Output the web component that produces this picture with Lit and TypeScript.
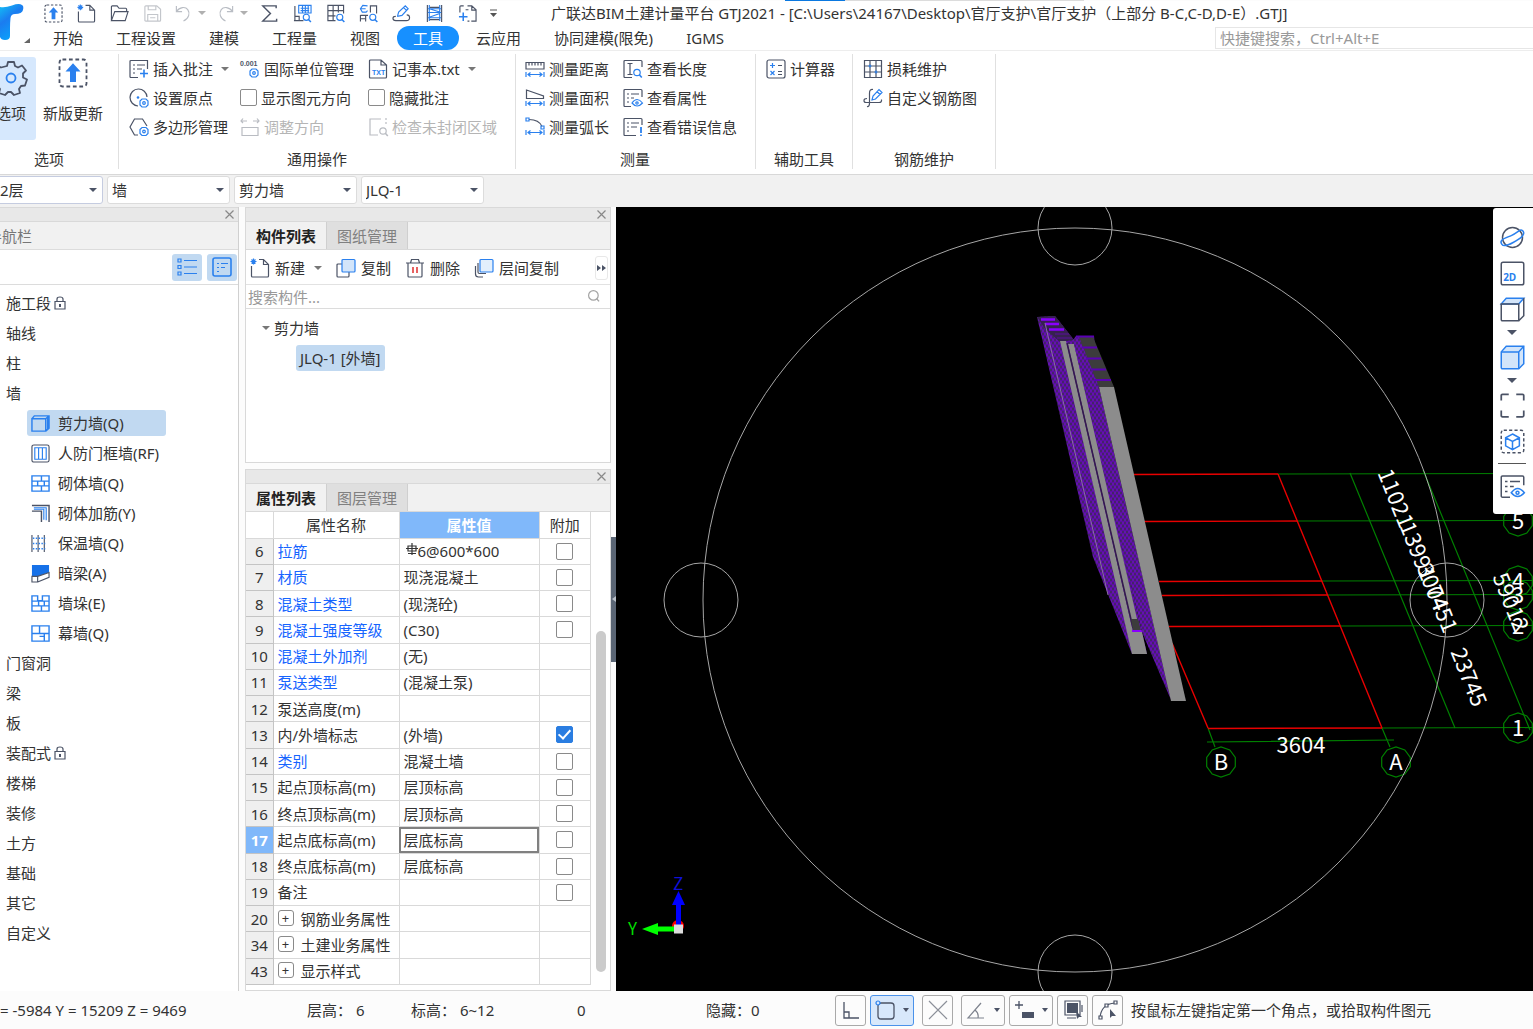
import { LitElement, html, svg, css, nothing, type SVGTemplateResult } from "lit";
import { customElement, state } from "lit/decorators.js";
import { classMap } from "lit/directives/class-map.js";

const D = "#4b5366";
const B = "#2a80ee";

const measureBar = svg`<path d="M1 13v5M19 13v5M3 15.500h14M5.500 13.500L3 15.500l2.500 2M14.500 13.500l2.500 2-2.500 2" stroke=${B}/>`;
const gear = (cx: number, cy: number, color = B) => svg`
  <path d="M${cx - 2} ${cy - 4}h4l2 2v4l-2 2h-4l-2-2v-4z" stroke=${color}/><circle cx=${cx} cy=${cy} r="1.300" stroke=${color}/>`;
const lens = (cx: number, cy: number, color = B) => svg`
  <circle cx=${cx} cy=${cy} r="3.200" stroke=${color}/><path d="M${cx + 2.3} ${cy + 2.3}l2.500 2.700" stroke=${color} stroke-width="1.600"/>`;

const icons: Record<string, SVGTemplateResult> = {
  upload: svg`<rect x="1" y="1" width="18" height="18" rx="2" stroke=${D} stroke-dasharray="2.500 1.800"/>
    <path d="M10 3.500l5 5.500h-3v7H8V9H5z" fill=${B}/>`,
  newfile: svg`<path d="M1.500 8v10q0 1 1 1h15q1 0 1-1V6.500l-5-5H9M13.500 1.500v5h5" stroke=${D}/>
    <path d="M0.500 3.500h6M3.500 0.500v6M1.500 1.500l4 4M5.500 1.500l-4 4" stroke=${B}/>`,
  open: svg`<path d="M1.500 17V3q0-1 1-1h5l2 2.500h7q1 0 1 1V8M1.500 17.500L5 8h14l-3 9.500z" stroke=${D}/>`,
  save: svg`<path d="M2 3q0-1 1-1h11.500L18.500 5.500V17q0 1-1 1H3q-1 0-1-1zM5.500 2v4h8V2M5 18v-7h10.500v7M7.500 14.500H13" stroke="#c3c6cb"/>`,
  undo: svg`<path d="M2.500 2v6h6M2.500 8C6 3 12 2.500 14.500 6s1.500 9-4.500 12" stroke="#b9bdc4"/>`,
  redo: svg`<path d="M17.500 2v6h-6M17.500 8C14 3 8 2.500 5.500 6s-1.500 9 4.500 12" stroke="#b9bdc4"/>`,
  sigma: svg`<path d="M17 4.500V2H3l8 8-8 8h14.500v-2.500" stroke=${D} stroke-width="1.500"/>`,
  floorFind: svg`<path d="M2 2v15.500h9M2 13h4.500v4.500M1 17.500h3" stroke=${D}/>
    <path d="M6 1.500h13v8H6zM8 4.500h9M8 7h9M10 2v7M13 2v7M16 2v7" stroke=${B}/>${lens(14, 14)}`,
  gridFind: svg`<path d="M10 17.500H2V1.500h16.500V10M2 7h16.500M2 12.500h8M7.500 1.500v16M13 1.500V9" stroke=${D}/>${lens(14.500, 14)}`,
  compFind: svg`<path d="M1.500 11.500v7M1.500 12h8M7 12v6.500M1.500 15.500H7M12 9V2h6.500v8" stroke=${D}/>
    <path d="M9 2L4 1.500 1.500 5l2 3.500h4L9 7M2 5h5" stroke=${B}/>${lens(14.500, 14)}`,
  edit: svg`<path d="M6 12l1-3.500L14 2l3 3-6.500 7L6 13zM12.500 4l3 3" stroke=${B}/><path d="M1 15q0 2.500 3 2.500h11q3.500 0 3.500-3t-3-3M1 15q0-2 3-2" stroke=${D}/>`,
  beam: svg`<path d="M2.500 1v18M17.500 1v18M4.500 3.500h11M4.500 16.500h11" stroke=${D}/><path d="M3 5h14M3 9h14M3 14.500h14M4.500 5l11 3.500M4.500 14l11-4M4.500 1v17M15.500 1v17" stroke=${B}/>`,
  pageAdd: svg`<path d="M2 9V3q0-1 1-1h3M10 2h4.500L19 6v12h-5M14.500 2v4.500H19M12 18h-2M8 6h3" stroke=${D}/><path d="M1 13.500h9M5.500 9v9" stroke=${B} stroke-width="1.600"/>`,
  note: svg`<path d="M9 18.500H2q-1 0-1-1v-15q0-1 1-1h16.500V10" stroke=${D}/><path d="M4 6h2M8 6h8M4 10h2M8 10h5M4 14h2" stroke=${D}/><path d="M11 14.500h8M15 10.500v8" stroke=${B} stroke-width="1.600"/>`,
  origin: svg`<path d="M9 18A8.500 8.500 0 1 1 18 9" stroke=${D}/><circle cx="9" cy="9.500" r="1.300" fill=${B}/>${gear(15, 15)}`,
  polygon: svg`<path d="M9 18H5.500L1 10l4.500-8h8L18 9" stroke=${D}/>${gear(15, 14.500)}`,
  unit: svg`<text x="0" y="7" font-size="7" font-weight="700" fill=${D} stroke="none" font-family="Liberation Sans, sans-serif">0.001</text>${gear(14, 14)}`,
  direction: svg`<path d="M1 4h6M3 1.500L1 4l2 2M13 4h6M17 1.500L19 4l-2 2M2 10.500h16v8H2z" stroke="#b9bcc2"/>`,
  txt: svg`<path d="M1.500 18V2q0-1 1-1H13l5.500 5v12q0 1-1 1h-15q-1 0-1-1M13 1v5h5.500" stroke=${D}/>
    <text x="4" y="15.500" font-size="7" font-weight="700" fill=${B} stroke="none" font-family="Liberation Sans, sans-serif">TXT</text>`,
  region: svg`<path d="M13 2H2v16h8M18 1v2M18 5v2" stroke="#b9bcc2"/>${lens(15, 14, "#b9bcc2")}`,
  distance: svg`<path d="M1 3.500h18v6.500H1zM4 3.500v3M7 3.500v3M10 3.500v3M13 3.500v3M16 3.500v3" stroke=${D}/>${measureBar}`,
  area: svg`<path d="M1.500 2v8.500h17V8z" stroke=${D}/>${measureBar}`,
  arc: svg`<path d="M4 2.500q10 0 13 7" stroke=${D}/><path d="M1 1h3v3H1zM16 9h3v3h-3z" stroke=${B}/>${measureBar}`,
  length: svg`<path d="M9 18.500H2q-1 0-1-1v-15q0-1 1-1h16q1 0 1 1V8M4.500 4.500h5M7 4.500v11M4.500 15.500h5" stroke=${D}/>${lens(14, 13.500)}`,
  props: svg`<path d="M8 18.500H2q-1 0-1-1v-15q0-1 1-1h16q1 0 1 1V9M4 6h2M8 6h8M4 10h2M8 10h3M4 14h2" stroke=${D}/>
    <path d="M9 15q5-7 10.500 0-5.500 6-10.500 0z" stroke=${B}/><circle cx="14" cy="15" r="1.200" stroke=${B}/>`,
  errors: svg`<path d="M13 18.500H2q-1 0-1-1v-15q0-1 1-1h16q1 0 1 1V8M4 6h2M8 6h8M4 10h2M8 10h6M4 14h2" stroke=${D}/><path d="M18 10v6M18 17.500v1.500" stroke=${B} stroke-width="1.800"/>`,
  calc: svg`<rect x="1" y="1" width="18" height="18" rx="2" stroke=${D}/><path d="M12 6.500h4M12 12.500h4M12 15.500h4" stroke=${D}/><path d="M4 6.500h5M6.500 4v5M4.500 12l4 4M8.500 12l-4 4" stroke=${B}/>`,
  loss: svg`<path d="M1.500 1.500h17v17h-17zM1.500 7h17M1.500 13h17M7 1.500v17M13 1.500v17" stroke=${D}/><path d="M7 5.500v3M5.500 7h3M13 11.500v3M11.500 13h3" stroke=${B}/>`,
  rebar: svg`<path d="M10 1.500Q6.500 1 6.500 5v10q0 4-2.500 3.500M4 10.500q-3 0-3 2t2 2h13q3 0 2.500-3" stroke=${D}/><path d="M9 12l1-4 6-6.500 3 3L12.500 11zM14 3.500l3 3" stroke=${B}/>`,
  copy: svg`<path d="M6 6H2q-1 0-1 1v11q0 1 1 1h10q1 0 1-1v-4" stroke=${D}/><rect x="6" y="1.500" width="13" height="12.500" rx="1" stroke=${B} fill="#d3e5fa"/>`,
  trash: svg`<path d="M1 5h18M5.500 5l1-3.500h7l1 3.500M3 5v13q0 1 1 1h12q1 0 1-1V5" stroke=${D}/><path d="M8 9v6M12 9v6" stroke="#e23b3b" stroke-width="1.600"/>`,
  layerCopy: svg`<path d="M4 5v9q0 1.500 1.500 1.500H12M1.500 8v8q0 3 3 3H9" stroke=${D}/><rect x="6" y="1.500" width="13" height="12.500" rx="1" stroke=${B} fill="#e3effc"/>`,
  list: svg`<path d="M1 2h3v3H1zM1 8.500h3v3H1zM1 15h3v3H1zM7 3.500h13M7 10h13M7 16.500h13" stroke=${B}/>`,
  card: svg`<rect x="1" y="1" width="18" height="18" rx="2" stroke=${B} stroke-width="1.600"/><path d="M5 6.500h2M9 6.500h7M5 10.500h2M9 10.500h4M5 14.500h2" stroke=${B}/>`,
  shear: svg`<path d="M1 5h14.500v13H1zM1 5l2.500-3H19v13l-3.500 3M15.500 5L19 2M17.500 4v12" stroke=${B} stroke-width="1.500"/>`,
  door: svg`<rect x="1" y="1" width="18" height="18" rx="2" stroke=${D}/><path d="M4 4h12v12H4zM8 4v12M12 4v12" stroke=${B}/>`,
  brick: svg`<path d="M1 2h18v16H1zM1 7.500h18M1 12.500h18M11 2v5.500M7 7.500v5M14 7.500v5M11 12.500V18" stroke=${B} stroke-width="1.500"/>`,
  brickBar: svg`<path d="M1 1.500h18V19M1 7.500h10V19" stroke=${D} stroke-width="1.500"/><path d="M3 4h13v13M3 5.500h10.500v11" stroke=${B}/>`,
  insulate: svg`<path d="M1 1v18M7.500 1v18M14 1v18" stroke=${D}/><path d="M2 4.500h13M2 10h13M2 15.500h13" stroke=${B} stroke-width="1.500" stroke-dasharray="1.500 1.500"/>`,
  hidden: svg`<path d="M1 1h18v8l-11 4H1z" fill="#1671e8"/><path d="M1 13h6v6H1zM7 13l12-4v5L7 19" stroke=${D} fill="#fff"/>`,
  pier: svg`<path d="M1 2h6v5h5V2h7v16H1zM1 7.500h18M1 12.500h18M8 7.500v5M14 7.500v5M11 12.500V18" stroke=${B} stroke-width="1.500"/>`,
  curtain: svg`<path d="M1 2h18v16H1zM1 10h18M9 2v8M14 10v8M9 13h5" stroke=${B} stroke-width="1.500"/>`,
  orbit: svg`<circle cx="10" cy="10" r="8" stroke=${D}/><path d="M1.500 15.500C-1 12 3 11 9 8.500S16.500 2 18.500 5 16 11 10.500 14 2.500 17 1.500 15.500z" stroke=${B}/>`,
  twoD: svg`<rect x="1" y="1" width="18" height="18" rx="1.500" stroke=${D}/><text x="2.500" y="16" font-size="8" font-weight="700" fill=${B} stroke="none" font-family="Open Sans, sans-serif">2D</text>`,
  cubeTop: svg`<path d="M1 5.500L5 1h14l-4 4.500z" stroke=${B} fill="#d3e5fa"/><path d="M1 5.500h14V19H2q-1 0-1-1zM15 19l4-4V1" stroke=${D}/>`,
  cube: svg`<path d="M1 5.500L5 1h14v14l-4 4H2q-1 0-1-1z" fill="#d3e5fa" stroke=${B}/><path d="M1 5.500h14V19M15 5.500L19 1" stroke=${B}/>`,
  frame: svg`<path d="M1 6V2q0-1 1-1h5M13 1h5q1 0 1 1v4M19 14v4q0 1-1 1h-5M7 19H2q-1 0-1-1v-4" stroke=${D} stroke-width="1.400"/>`,
  cubeBox: svg`<rect x="1" y="1" width="18" height="18" rx="2" stroke=${D} stroke-dasharray="2.500 1.800"/><path d="M10 4l5.500 3v6.500L10 16.500l-5.500-3V7zM4.500 7L10 10l5.500-3M10 10v6.500" stroke=${B}/>`,
  lock: svg`<path d="M1 5.500h10V13H1zM3 5.500V3q0-2 3-2t3 2v2.500" stroke=${D}/><path d="M6 8v3" stroke=${D} stroke-width="2"/>`,
  find: svg`<circle cx="8" cy="8" r="6" stroke="#a3a3a3" stroke-width="1.500"/><path d="M12 12l3 3.500" stroke="#a3a3a3" stroke-width="1.800"/>`,
  ortho: svg`<path d="M3 2v16h15M3 12h5v6" stroke=${D} stroke-width="1.300"/>`,
  rectSel: svg`<rect x="3" y="3" width="16" height="16" rx="3" stroke=${D} stroke-width="1.300"/><circle cx="3" cy="3" r="2" stroke=${B} fill="#d8e8fb"/>`,
  cross: svg`<path d="M1 1l18 18M19 1L1 19" stroke="#8c9099"/>`,
  angle: svg`<path d="M18 18H2L15 3M9 10q4 3 3 8" stroke="#7d828d"/>`,
  plusBar: svg`<path d="M1 5h8M5 1v8" stroke=${D} stroke-width="1.300"/><path d="M8 12h12v6H8z" fill=${D}/>`,
  stack: svg`<path d="M4 3h11v10H4z" fill=${D}/><path d="M2 1h15v14H2zM4 18h9M19 5v7" stroke=${D}/><path d="M13 11l6 6-3 0-2 2z" fill=${D}/>`,
  curve: svg`<path d="M2 18Q3 4 17 3" stroke=${D}/><path d="M1 16h3v3H1zM16 1h3v3h-3zM7 4h3v3H7z" fill="#fff" stroke=${D}/><path d="M12 9l6 7h-4l-2 2z" fill=${D}/>`,
};

const icon = (name: string, cls = "") =>
  html`<svg class="ic ${cls}" viewBox="0 0 20 20" fill="none" stroke-width="1.200" aria-hidden="true">${icons[name]}</svg>`;
const caret = html`<i class="caret"></i>`;

interface PropRow { n: number; name: string; value?: string; link?: boolean; box?: boolean; on?: boolean; group?: boolean; rebar?: boolean }

const propRows: PropRow[] = [
  { n: 6, name: "拉筋", value: "6@600*600", link: true, box: true, rebar: true },
  { n: 7, name: "材质", value: "现浇混凝土", link: true, box: true },
  { n: 8, name: "混凝土类型", value: "(现浇砼)", link: true, box: true },
  { n: 9, name: "混凝土强度等级", value: "(C30)", link: true, box: true },
  { n: 10, name: "混凝土外加剂", value: "(无)", link: true },
  { n: 11, name: "泵送类型", value: "(混凝土泵)", link: true },
  { n: 12, name: "泵送高度(m)" },
  { n: 13, name: "内/外墙标志", value: "(外墙)", box: true, on: true },
  { n: 14, name: "类别", value: "混凝土墙", link: true, box: true },
  { n: 15, name: "起点顶标高(m)", value: "层顶标高", box: true },
  { n: 16, name: "终点顶标高(m)", value: "层顶标高", box: true },
  { n: 17, name: "起点底标高(m)", value: "层底标高", box: true },
  { n: 18, name: "终点底标高(m)", value: "层底标高", box: true },
  { n: 19, name: "备注", box: true },
  { n: 20, name: "钢筋业务属性", group: true },
  { n: 34, name: "土建业务属性", group: true },
  { n: 43, name: "显示样式", group: true },
];

const wallTypes: [string, string][] = [
  ["shear", "剪力墙(Q)"], ["door", "人防门框墙(RF)"], ["brick", "砌体墙(Q)"], ["brickBar", "砌体加筋(Y)"],
  ["insulate", "保温墙(Q)"], ["hidden", "暗梁(A)"], ["pier", "墙垛(E)"], ["curtain", "幕墙(Q)"],
];

const octagon = (cx: number, cy: number, r = 15) =>
  Array.from({ length: 10 }, (_, i) => {
    const a = (i * Math.PI) / 5 + Math.PI / 10;
    return `${(cx + r * Math.cos(a)).toFixed(1)},${(cy + r * Math.sin(a)).toFixed(1)}`;
  }).join(" ");

@customElement("app-root")
export class AppRoot extends LitElement {
  @state() private tab = "工具";
  @state() private wall = 0;
  @state() private row = 17;

  static styles = css`
    :host {
      display: flex;
      flex-direction: column;
      height: 100vh;
      overflow: hidden;
      background: #fcfcfc;
      color: #333;
      font: 15px/20px "Noto Sans", "Noto Sans CJK SC", sans-serif;
      white-space: nowrap;
    }
    * { box-sizing: border-box; }
    button, input, select { font: inherit; color: inherit; margin: 0; }
    button { border: 0; background: none; padding: 0; }
    .ic { width: 20px; height: 20px; flex: none; display: block; overflow: visible; }
    .caret { width: 0; height: 0; flex: none; border: 4px solid transparent; border-top-color: #777; border-bottom: 0; }

    .strip { display: flex; height: 1px; flex: none; padding-left: 785px; }
    .strip .active { width: 60px; background: #0a78e0; }
    .strip .rest { width: 239px; background: #dcdcdc; }
    header { display: grid; grid-template: 24px 25px / 37px 1fr; flex: none; border-bottom: 1px solid #ededed; background: #fff; }
    .logo { grid-row: 1 / 3; width: 37px; height: 49px; }
    .title-row { display: flex; align-items: center; }
    .quick { display: flex; align-items: center; }
    .quick button { width: 33px; height: 22px; display: flex; align-items: center; justify-content: center; gap: 5px; }
    .quick .wide { width: 42px; }
    .quick .ic { width: 19px; height: 19px; }
    .quick .more { width: 18px; }
    .quick .more svg { width: 9px; height: 8px; }
    .quick .wide .caret { border-top-color: #b0b0b0; }
    .title { margin-left: 49px; }
    .tabs { display: flex; align-items: center; gap: 1px; }
    .tabs button { height: 24px; padding: 0 16px; border-radius: 12px; }
    .tabs .on { background: #1790ff; color: #fff; }
    .hotkey { width: 318px; height: 22px; margin-left: auto; border: 1px solid #e6e6e6; border-right: 0; padding: 0 4px; background: #fff; }
    input::placeholder { color: #999; opacity: 1; }
    input { outline: 0; border-radius: 0; }

    .ribbon { display: flex; flex: none; padding: 3px 0 5px; background: #fff; border-bottom: 1px solid #d8d8d8; }
    .group { display: flex; flex-direction: column; height: 115px; border-right: 1px solid #e0e0e0; padding: 0 9px; }
    .group footer { margin-top: auto; text-align: center; }
    .group.first { margin-left: -20px; width: 139px; padding: 0 6px; }
    .group.common { width: 397px; }
    .group.measure { width: 240px; padding-left: 8px; }
    .group.aux { width: 97px; }
    .group.steel { width: 143px; }
    .big { display: flex; }
    .big button { width: 50px; height: 83px; display: flex; flex-direction: column; align-items: center; gap: 14px; padding-top: 3px; border-radius: 3px; }
    .big button + button { width: 74px; }
    .big .ic { width: 30px; height: 30px; margin: 1px; }
    .big .on { background: #d6e8fd; margin-top: 3px; padding-top: 5px; gap: 9px; }
    .big .on .ic { width: 38px; height: 38px; margin: -3px; }
    .tools { display: grid; grid-auto-rows: 29px; grid-auto-flow: row; align-items: center; }
    .common .tools { grid-template-columns: 111px 128px 1fr; }
    .measure .tools { grid-template-columns: 98px 1fr; }
    .tool { display: flex; align-items: center; gap: 4px; padding-left: 1px; }
    .tool .caret { margin-left: 4px; }
    .dim { color: #b5b5b5; }
    input[type="checkbox"] { appearance: none; width: 17px; height: 17px; flex: none; border: 1px solid #8a8a8a; border-radius: 2px; background: #fff; display: inline-grid; place-items: center; vertical-align: middle; }
    input[type="checkbox"]:checked { background: #2a7de1; border-color: #2a7de1; }
    input[type="checkbox"]:checked::after { content: ""; width: 5px; height: 10px; border: solid #fff; border-width: 0 2px 2px 0; transform: rotate(42deg); margin-top: -3px; }

    .combos { display: flex; gap: 4px; flex: none; padding: 1px 0 3px; background: #f1f1f1; }
    .combo { position: relative; width: 123px; height: 28px; }
    .combo:first-child { margin-left: -20px; }
    .combo:first-child select { padding-left: 19px; border-color: #c5cce0; }
    .combo select { appearance: none; width: 100%; height: 100%; border: 1px solid #dcdcdc; border-radius: 3px; background: #fff; padding: 0 4px; }
    .combo .caret { position: absolute; right: 6px; top: 12px; border-top-color: #4b5366; }

    main { display: flex; flex: 1; min-height: 0; background: #fcfcfc; }
    .nav { width: 239px; flex: none; border-right: 1px solid #d0d0d0; overflow: hidden; background: #fff; }
    .bar { height: 15px; display: flex; justify-content: flex-end; align-items: center; background: #e8e8e8; border: 1px solid #d9d9d9; padding-right: 4px; }
    .bar button { line-height: 0; }
    .bar svg { width: 9px; height: 9px; display: block; }
    .nav .bar { border-left: 0; border-right: 0; }
    .nav h2 { margin: 0; height: 28px; background: #f1f1f1; border-bottom: 1px solid #dcdcdc; font: inherit; line-height: 28px; text-indent: -13px; color: #777; }
    .nav-tools { display: flex; justify-content: flex-end; align-items: center; gap: 5px; height: 35px; padding-right: 1px; border-bottom: 1px solid #dcdcdc; background: #fff; }
    .nav-tools button { width: 30px; height: 27px; display: grid; place-items: center; background: #c1d9f1; border-radius: 3px; }
    .nav ul { list-style: none; margin: 0; padding: 3px 0 0; }
    .nav li > button { height: 30px; padding-left: 6px; display: flex; align-items: center; gap: 3px; }
    .nav .lock { width: 12px; height: 14px; display: block; }
    .nav ul ul { padding: 0 0 0 27px; }
    .nav li li { padding: 2px 0; }
    .nav li li > button { height: 26px; width: 139px; padding-left: 4px; gap: 8px; border-radius: 3px; }
    .nav li li .on { background: #c1d9f1; }
    .nav li li .ic { width: 19px; height: 19px; }

    .mid { width: 366px; margin: 0 0 0 6px; flex: none; display: flex; flex-direction: column; gap: 6px; }
    .panel { border: 1px solid #d9d9d9; border-top: 0; background: #fff; display: flex; flex-direction: column; }
    .panel.comp { height: 256px; flex: none; }
    .panel.prop { flex: 1; min-height: 0; }
    .panel .bar { border-left: 0; border-right: 0; flex: none; }
    .ptabs { display: flex; height: 28px; flex: none; background: #f1f1f1; border-bottom: 1px solid #d9d9d9; }
    .ptabs button { width: 81px; border-right: 1px solid #cfcfcf; background: #dfdfdf; color: #808080; padding-top: 1px; }
    .ptabs .on { background: #f1f1f1; color: #222; font-weight: 700; }
    .ptools { display: flex; align-items: center; height: 35px; flex: none; padding: 2px 2px 0 4px; gap: 14px; border-bottom: 1px solid #e2e2e2; }
    .ptools .tool { padding: 0; gap: 5px; }
    .ptools .more { margin-left: auto; width: 13px; height: 24px; border: 1px solid #e8e8e8; border-radius: 3px; display: grid; place-items: center; }
    .more svg { width: 9px; height: 6px; }
    .search { display: flex; align-items: center; height: 24px; flex: none; padding-right: 7px; border-bottom: 1px solid #dcdcdc; }
    .search input { border: 0; flex: 1; padding: 0 2px; background: none; }
    .search .ic { width: 16px; height: 16px; }
    .tree { padding: 5px 16px; }
    .tree button { display: flex; align-items: center; gap: 4px; height: 28px; }
    .tree .leaf { margin: 3px 0 0 34px; height: 26px; padding: 0 4px; background: #c1d9f1; border-radius: 3px; }

    .sheet { display: flex; flex: 1; min-height: 0; padding-bottom: 5px; }
    table { width: 345px; height: 100%; border-collapse: collapse; table-layout: fixed; flex: none; }
    thead tr { height: 26px; }
    col.n { width: 27px; }
    col.name { width: 126px; }
    col.val { width: 140px; }
    th, td { padding: 0 4px; border: 1px solid #d9d9d9; border-left: 0; border-top: 0; text-align: left; font-weight: 400; line-height: 20px; }
    thead th { text-align: center; padding: 0; height: 26px; }
    thead .hot { background: #80b8fa; color: #fff; font-weight: 700; }
    tbody th { background: #efefef; text-align: center; padding: 0; border-color: #c4c4c4; }
    tbody .cur th { background: #80b8fa; color: #fff; font-weight: 700; }
    tbody .cur .val { outline: 2px solid #808080; outline-offset: -2px; }
    td.link { color: #1664ff; }
    td.box { text-align: center; line-height: 0; }
    td button { width: 16px; height: 16px; border: 1px solid #8a8a8a; border-radius: 3px; line-height: 12px; margin-right: 7px; vertical-align: 2px; font-size: 13px; }
    td .bar-mark { width: 12px; height: 12px; margin-left: 2px; vertical-align: 2px; }
    .scroll { flex: 1; display: flex; flex-direction: column; align-items: center; }
    .scroll .before { flex: 119; }
    .scroll .thumb { flex: 341; width: 10px; border-radius: 5px; background: #cbcbcb; }
    .scroll .after { flex: 13; }
    .split { align-self: center; width: 5px; height: 125px; background: #5b6675; padding: 0; display: grid; place-items: center; }
    .split i { border: 3px solid transparent; border-right: 4px solid #b9c0c9; border-left: 0; }

    .view { position: relative; flex: 1; min-width: 0; background: #000; }
    .view > svg { position: absolute; inset: 0; width: 100%; height: 100%; }
    .dock { position: absolute; right: 0; top: 1px; width: 40px; background: #fff; border-radius: 3px 0 0 3px; padding: 15px 8px 10px 6px; display: flex; flex-direction: column; align-items: center; }
    .dock button { height: 36px; display: flex; align-items: center; justify-content: center; }
    .dock .ic { width: 25px; height: 25px; }
    .dock .caret { margin: 3px 0 4px; border-width: 5px 5px 0; border-top-color: #4b5366; }
    .dock hr { width: 28px; height: 1px; margin: 4px 0; border: 0; background: #555; }
    .dock button:first-child { height: 28px; margin-bottom: 4px; }

    .status { display: flex; align-items: center; height: 38px; flex: none; background: #fcfcfc; }
    .status span { flex: none; }
    .s1 { width: 307px; } .s2 { width: 104px; } .s3 { width: 166px; } .s4, .s5 { width: 129px; }
    .status button { height: 31px; width: 31px; border: 1px solid #a9a9a9; border-radius: 3px; display: flex; align-items: center; justify-content: center; gap: 8px; margin-right: 4px; }
    .status button.menu { width: 44px; }
    .status button.on { background: #d8e8fb; border-color: #4a92ea; }
    .status button.gap { margin-right: 8px; }
    .status button .caret { border-width: 4px 3px 0; border-top-color: #4b5366; }
    .status .hint { margin-left: 4px; }
  `;

  private tool(name: string, label: string, menu = false, dim = false) {
    return html`<button class=${classMap({ tool: true, dim })} ?disabled=${dim}>${icon(name)}<span>${label}</span>${menu ? caret : nothing}</button>`;
  }

  private closeBar() {
    return html`<div class="bar"><button aria-label="关闭"><svg viewBox="0 0 9 9"><path d="M.5 .5l8 8M8.500 .5l-8 8" stroke="#888" stroke-width="1.200"/></svg></button></div>`;
  }

  private header() {
    const tabs = ["开始", "工程设置", "建模", "工程量", "视图", "工具", "云应用", "协同建模(限免)", "IGMS"];
    return html`
      <div class="strip"><i class="active"></i><i class="rest"></i></div>
      <header>
        <svg class="logo" viewBox="0 1 37 49" aria-hidden="true">
          <defs><linearGradient id="lg" x1="0" y1="0" x2="0.500" y2="1"><stop offset="0" stop-color="#12c1f5"/><stop offset="0.450" stop-color="#1b7cf0"/><stop offset="1" stop-color="#08a4fb"/></linearGradient></defs>
          <path d="M0 7Q5 8 12 5.500T22 5q2 1 1 5t-8 4q-4 0-4.500 4-.5 5-.5 10v8q0 4-5 4-4 0-5-3z" fill="url(#lg)"/>
          <path d="M30 38v5h-6z" fill="#666"/>
        </svg>
        <div class="title-row">
          <div class="quick">
            ${["upload", "newfile", "open", "save"].map((n) => html`<button aria-label=${n}>${icon(n)}</button>`)}
            <button class="wide" aria-label="撤销">${icon("undo")}${caret}</button>
            <button class="wide" aria-label="恢复">${icon("redo")}${caret}</button>
            ${["sigma", "floorFind", "gridFind", "compFind", "edit", "beam", "pageAdd"].map((n) => html`<button aria-label=${n}>${icon(n)}</button>`)}
            <button class="more" aria-label="更多"><svg viewBox="0 0 9 8"><path d="M1 1h7" stroke="#555"/><path d="M1 4h7L4.500 8z" fill="#555"/></svg></button>
          </div>
          <div class="title">广联达BIM土建计量平台 GTJ2021 - [C:\\Users\\24167\\Desktop\\官厅支护\\官厅支护（上部分 B-C,C-D,D-E）.GTJ]</div>
        </div>
        <nav class="tabs">
          ${tabs.map((t) => html`<button class=${classMap({ on: t === this.tab })} @click=${() => (this.tab = t)}>${t}</button>`)}
          <input class="hotkey" aria-label="快捷键搜索" placeholder="快捷键搜索，Ctrl+Alt+E" />
        </nav>
      </header>`;
  }

  private ribbon() {
    return html`<section class="ribbon">
      <div class="group first">
        <div class="big">
          <button class="on">
            <svg class="ic" viewBox="0 0 38 38" fill="none" stroke-width="1.800" aria-hidden="true">
              <path d="M16 3h6l1 4 3 1.500 4-2 4 5-3 3v4l4 2-2 6-4 .5-2 3 1 4-6 2-3-3h-3l-3 3-6-2 1-4-2-3-4-.5-2-6 4-2v-4l-3-3 4-5 4 2L15 7z" stroke=${D} stroke-linejoin="round"/><circle cx="19" cy="19" r="4.500" stroke=${B}/>
            </svg>选项</button>
          <button>${icon("upload")}新版更新</button>
        </div>
        <footer>选项</footer>
      </div>
      <div class="group common">
        <div class="tools">
          ${this.tool("note", "插入批注", true)}${this.tool("unit", "国际单位管理")}${this.tool("txt", "记事本.txt", true)}
          ${this.tool("origin", "设置原点")}
          <label class="tool"><input type="checkbox" />显示图元方向</label>
          <label class="tool"><input type="checkbox" />隐藏批注</label>
          ${this.tool("polygon", "多边形管理")}${this.tool("direction", "调整方向", false, true)}${this.tool("region", "检查未封闭区域", false, true)}
        </div>
        <footer>通用操作</footer>
      </div>
      <div class="group measure">
        <div class="tools">
          ${this.tool("distance", "测量距离")}${this.tool("length", "查看长度")}
          ${this.tool("area", "测量面积")}${this.tool("props", "查看属性")}
          ${this.tool("arc", "测量弧长")}${this.tool("errors", "查看错误信息")}
        </div>
        <footer>测量</footer>
      </div>
      <div class="group aux"><div class="tools">${this.tool("calc", "计算器")}</div><footer>辅助工具</footer></div>
      <div class="group steel"><div class="tools">${this.tool("loss", "损耗维护")}${this.tool("rebar", "自定义钢筋图")}</div><footer>钢筋维护</footer></div>
    </section>`;
  }

  private nav() {
    const lock = html`<svg class="lock" viewBox="0 0 12 14" fill="none" stroke-width="1.200">${icons.lock}</svg>`;
    const item = (t: string, extra: unknown = nothing) => html`<li><button>${t}${extra}</button></li>`;
    return html`<aside class="nav">
      ${this.closeBar()}
      <h2>导航栏</h2>
      <div class="nav-tools"><button aria-label="列表">${icon("list")}</button><button aria-label="卡片">${icon("card")}</button></div>
      <ul>
        ${item("施工段", lock)}${item("轴线")}${item("柱")}
        <li><button>墙</button>
          <ul>${wallTypes.map(([n, t], i) => html`<li><button class=${classMap({ on: i === this.wall })} @click=${() => (this.wall = i)}>${icon(n)}${t}</button></li>`)}</ul>
        </li>
        ${item("门窗洞")}${item("梁")}${item("板")}${item("装配式", lock)}
        ${["楼梯", "装修", "土方", "基础", "其它", "自定义"].map((t) => item(t))}
      </ul>
    </aside>`;
  }

  private panels() {
    return html`<div class="mid">
      <section class="panel comp">
        ${this.closeBar()}
        <div class="ptabs"><button class="on">构件列表</button><button>图纸管理</button></div>
        <div class="ptools">
          ${this.tool("newfile", "新建", true)}${this.tool("copy", "复制")}${this.tool("trash", "删除")}${this.tool("layerCopy", "层间复制")}
          <button class="more" aria-label="更多"><svg viewBox="0 0 9 6"><path d="M0 0l4 3-4 3zM5 0l4 3-4 3z" fill=${D}/></svg></button>
        </div>
        <div class="search"><input aria-label="搜索构件" placeholder="搜索构件..." />${icon("find")}</div>
        <div class="tree"><button>${caret}剪力墙</button><button class="leaf">JLQ-1 [外墙]</button></div>
      </section>
      <section class="panel prop">
        ${this.closeBar()}
        <div class="ptabs"><button class="on">属性列表</button><button>图层管理</button></div>
        <div class="sheet">
          <table>
            <colgroup><col class="n" /><col class="name" /><col class="val" /><col /></colgroup>
            <thead><tr><th></th><th>属性名称</th><th class="hot">属性值</th><th>附加</th></tr></thead>
            <tbody>
              ${propRows.map((r) => html`<tr class=${classMap({ cur: r.n === this.row })} @click=${() => (this.row = r.n)}>
                <th>${r.n}</th>
                <td class=${classMap({ link: !!r.link })}>${r.group ? html`<button aria-label="展开">+</button>` : nothing}${r.name}</td>
                <td class="val">${r.rebar ? html`<svg class="bar-mark" viewBox="0 0 12 12" fill="none" stroke="#333" stroke-width="1.200"><path d="M6 0v12M2 3h8v5H2zM0 5.500h12M2 10.500h8"/></svg>` : nothing}${r.value ?? nothing}</td>
                <td class="box">${r.box ? html`<input type="checkbox" aria-label=${r.name} ?checked=${!!r.on} />` : nothing}</td>
              </tr>`)}
            </tbody>
          </table>
          <div class="scroll"><i class="before"></i><i class="thumb"></i><i class="after"></i></div>
        </div>
      </section>
    </div>`;
  }

  private scene() {
    const rows: [number, number, number, number][] = [
      [474, 1133, 1278, 1533], [521, 1144, 1297, 1515], [581, 1159, 1322, 1533],
      [595, 1162, 1327, 1533], [626, 1169, 1340, 1533], [728, 1208, 1382, 1533],
    ];
    const dims: [string, number, number][] = [
      ["11021", 1396, 498], ["13991", 1418, 551], ["3004", 1433, 587], ["7451", 1442, 609], ["23745", 1469, 677], ["59012", 1511, 602],
    ];
    const bubbles: [string, number, number][] = [
      ["B", 1221, 762], ["A", 1396, 762], ["1", 1518, 728], ["2", 1518, 626], ["3", 1518, 595], ["4", 1518, 581], ["5", 1518, 521],
    ];
    return html`<svg viewBox="616 207 917 784" preserveAspectRatio="xMidYMid slice" font-family="Noto Sans CJK SC, sans-serif" role="img" aria-label="三维视图">
      <defs>
        <pattern id="weave" width="4" height="6" patternUnits="userSpaceOnUse"><rect width="4" height="6" fill="#5a0fa0"/><path d="M0 1h2M2 4h2" stroke="#3d2a55" stroke-width="1.500"/><path d="M3 0v2M1 3v2" stroke="#6c18bd"/></pattern>
      </defs>
      <g stroke="#008000" fill="none" stroke-width="1.200">
        ${rows.map(([y, , a, b]) => svg`<path d="M${a} ${y}L${b} ${y - 0.5}"/>`)}
        <path d="M1350 473L1455 728M1423 470L1530 730M1208 728l7 19M1382 728l8 19M1207 742l187-2"/>
        ${bubbles.map(([, x, y]) => svg`<polygon points=${octagon(x, y)}/>`)}
      </g>
      <g stroke="#e80000" fill="none" stroke-width="1.400">
        ${rows.map(([y, a, b]) => svg`<path d="M${a} ${y}.500L${b} ${y}"/>`)}
        <path d="M1278 474L1382 728M1172 643L1208 728"/>
      </g>
      <g>
        <path d="M1037 317L1055 316 1074 340 1142 632 1147 654 1132 654 1093 557z" fill="url(#weave)"/>
        <path d="M1037 317l18-1 19 24-14 2-15-13z" fill="#36214f"/>
        <path d="M1041 319.500h14M1045 324h14M1049 329.500h15" stroke="#8a00ff" stroke-width="2.500"/>
        <path d="M1055 334h14M1057 338h15" stroke="#5a0f9c"/>
        <path d="M1045 323L1108 595" stroke="#8c6ca8"/>
        <path d="M1060 341h6L1133 632h9l5 22h-15z" fill="#8c8c8c"/>
        <path d="M1068 344h6L1137 619h-6z" fill="#8c8c8c"/>
        <path d="M1067 343L1133 628" stroke="#331a4d" stroke-width="1.500"/>
        <path d="M1131 619h7l3 12h-8z" fill="#3c3c3c"/><path d="M1132 631h10" stroke="#8a00ff" stroke-width="2"/>
        <path d="M1073 340l3-4h18L1099 387 1171 700 1142 632z" fill="url(#weave)"/>
        <path d="M1079 337h14L1114 387h-15z" fill="#3c3c3c"/>
        <path d="M1076 336.500h18M1082 347.500h15M1086 358.500h15M1091 369.500h15M1094 380h17" stroke="#5a00b4" stroke-width="2"/>
        <path d="M1099 387h15L1186 701h-15z" fill="#8c8c8c"/>
      </g>
      <g stroke="#a6a6a6" fill="none">
        <circle cx="1075" cy="600" r="372"/>
        <circle cx="1075" cy="228" r="37"/><circle cx="1075" cy="972" r="37"/><circle cx="701" cy="600" r="37"/><circle cx="1447" cy="600" r="37"/>
      </g>
      <g fill="#fff" font-size="22" text-anchor="middle">
        ${bubbles.map(([t, x, y]) => svg`<text x=${x} y=${y + 8}>${t}</text>`)}
        <text x="1301" y="753">3604</text>
        ${dims.map(([t, x, y]) => svg`<text transform="translate(${x} ${y}) rotate(68)" y="8">${t}</text>`)}
      </g>
      <g>
        <circle cx="678" cy="926" r="6" fill="#f00"/>
        <path d="M676 925v-20h-4l6.500-14 6.500 14h-4v20z" fill="#00f"/>
        <path d="M674 926.500h-16V923l-16 6 16 6v-3.500h16z" fill="#0f0"/>
        <rect x="674" y="924.500" width="9" height="9" fill="#ddd"/>
        <text x="673" y="890" font-size="17" fill="#1010d8">Z</text>
        <text x="628" y="935" font-size="17" fill="#0d0">Y</text>
      </g>
    </svg>`;
  }

  render() {
    const combos = ["2层", "墙", "剪力墙", "JLQ-1"];
    const names = ["楼层", "构件类别", "构件类型", "构件"];
    const btn = (n: string) => html`<button aria-label=${n}>${icon(n)}</button>`;
    return html`
      ${this.header()}${this.ribbon()}
      <div class="combos">${combos.map((c, i) => html`<div class="combo"><select aria-label=${names[i]}><option>${c}</option></select>${caret}</div>`)}</div>
      <main>
        ${this.nav()}${this.panels()}
        <button class="split" aria-label="折叠"><i></i></button>
        <section class="view">
          ${this.scene()}
          <div class="dock">
            ${btn("orbit")}${btn("twoD")}${btn("cubeTop")}${caret}${btn("cube")}${caret}${btn("frame")}${btn("cubeBox")}<hr />${btn("props")}
          </div>
        </section>
      </main>
      <footer class="status">
        <span class="s1">= -5984 Y = 15209 Z = 9469</span><span class="s2">层高：&nbsp;6</span><span class="s3">标高：&nbsp;6~12</span><span class="s4">0</span><span class="s5">隐藏：0</span>
        <button aria-label="正交">${icon("ortho")}</button>
        <button class="menu on gap" aria-label="矩形">${icon("rectSel")}${caret}</button>
        <button class="gap" aria-label="交点">${icon("cross")}</button>
        <button class="menu" aria-label="角度">${icon("angle")}${caret}</button>
        <button class="menu" aria-label="偏移">${icon("plusBar")}${caret}</button>
        <button aria-label="图层">${icon("stack")}</button>
        <button aria-label="曲线">${icon("curve")}</button>
        <span class="hint">按鼠标左键指定第一个角点，或拾取构件图元</span>
      </footer>`;
  }
}
